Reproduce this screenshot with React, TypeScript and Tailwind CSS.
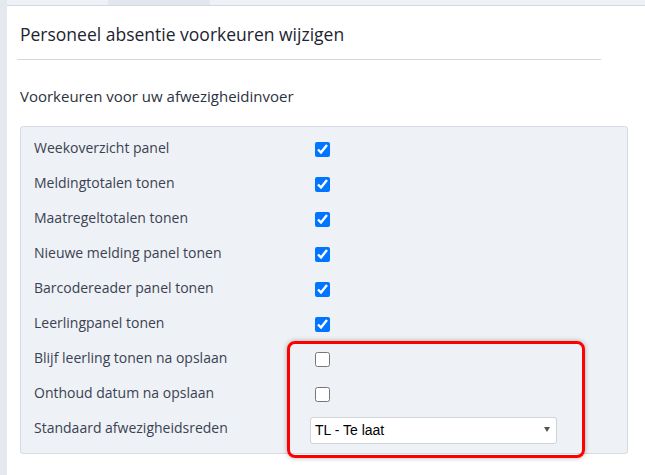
const rows = [
  { label: "Weekoverzicht panel", checked: true },
  { label: "Meldingtotalen tonen", checked: true },
  { label: "Maatregeltotalen tonen", checked: true },
  { label: "Nieuwe melding panel tonen", checked: true },
  { label: "Barcodereader panel tonen", checked: true },
  { label: "Leerlingpanel tonen", checked: true },
  { label: "Blijf leerling tonen na opslaan", checked: false },
  { label: "Onthoud datum na opslaan", checked: false },
];

const App = () => {
  return (
    <div className="relative flex w-full h-[475px] bg-white overflow-hidden font-['Open_Sans',sans-serif]">
      <div className="w-[7px] shrink-0 bg-[#e4e8ef]" />
      <div className="flex-1 flex flex-col">
        <div className="flex h-[6px] border-b border-[#d3d9e1] bg-[#eef1f5]">
          <div className="w-[101px]" />
          <div className="w-[102px] bg-[#e2e6ee]" />
        </div>
        <div className="pl-[13px]">
          <h1 className="mt-[16px] text-[17.5px] leading-[24px] text-[#1d2430]">
            Personeel absentie voorkeuren wijzigen
          </h1>
          <div className="mt-[13px] w-[584px] -ml-[3px] border-t border-[#d3d9e1]" />
          <h2 className="mt-[26px] text-[15px] leading-[21px] text-[#2b3340]">
            Voorkeuren voor uw afwezigheidinvoer
          </h2>
          <div className="mt-[19px] w-[608px] border border-[#d5dbe3] rounded-[3px] bg-[#eef1f5] pl-[13px] pt-[3px] pb-[8px]">
            {rows.map((row) => (
              <div key={row.label} className="flex items-center h-[35px]">
                <span className="w-[276px] text-[14px] text-[#3a4252]">{row.label}</span>
                <input
                  type="checkbox"
                  defaultChecked={row.checked}
                  className="ml-[5px] mt-[4px] w-[15px] h-[15px] accent-[#0075ff]"
                />
              </div>
            ))}
            <div className="flex items-center h-[35px]">
              <span className="w-[276px] text-[14px] text-[#3a4252]">Standaard afwezigheidsreden</span>
              <div className="relative mt-[6px] flex items-center w-[247px] h-[27px] bg-white border border-[#ced4da] rounded-[3px] pl-[4px] font-['Liberation_Sans',sans-serif] text-[14px] text-black">
                TL - Te laat
                <span className="absolute right-[6px] top-[9px] w-0 h-0 border-l-[3.5px] border-r-[3.5px] border-t-[5px] border-l-transparent border-r-transparent border-t-[#555]" />
              </div>
            </div>
          </div>
        </div>
      </div>
      <div className="absolute left-[287px] top-[341px] w-[298px] h-[117px] border-[3px] border-[#ff0000] rounded-[8px] shadow-[0_0_5px_rgba(0,0,0,0.3)]" />
    </div>
  );
};

export default App;
